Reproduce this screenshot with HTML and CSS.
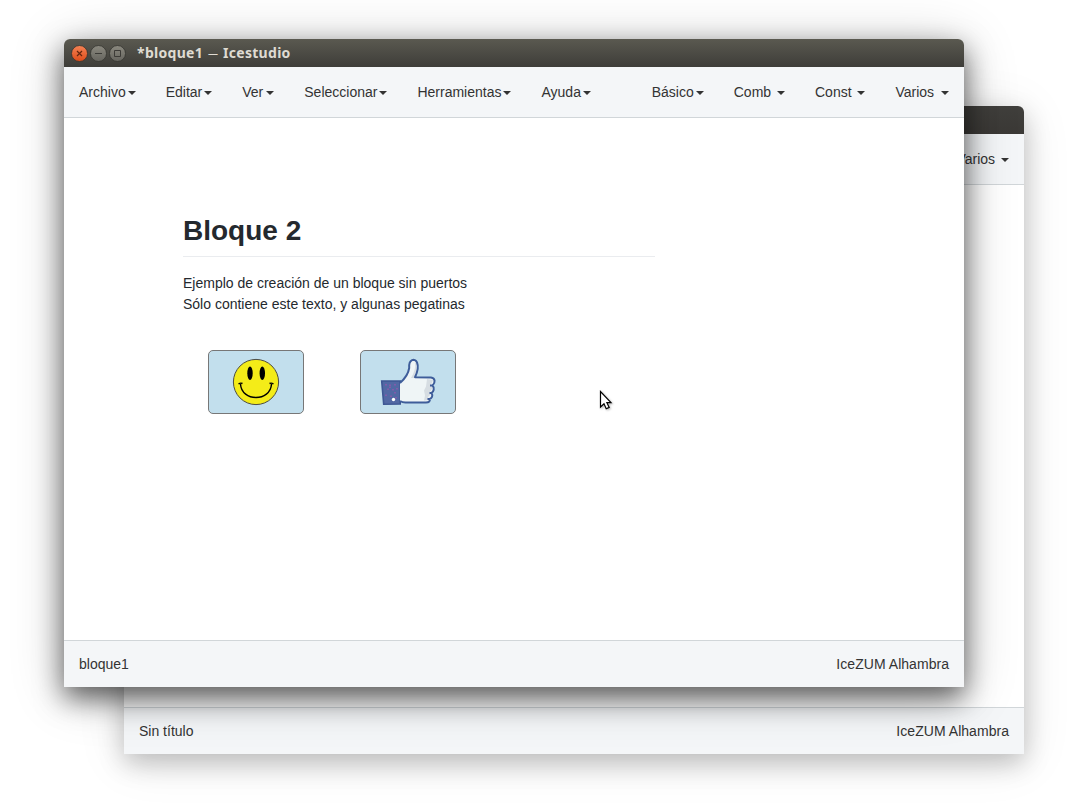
FILE: index.html
```html
<!DOCTYPE html>
<html lang="es">
<head>
<meta charset="utf-8">
<title>Icestudio</title>
<link rel="stylesheet" href="styles.css">
</head>
<body>
<main class="desktop">
  <section class="window window-back">
    <header class="titlebar"></header>
    <nav class="menubar"><div class="menu menu-right"><span class="item">Varios <i class="caret"></i></span></div></nav>
    <div class="canvas"></div>
    <footer class="statusbar"><span>Sin título</span><span class="board">IceZUM Alhambra</span></footer>
  </section>
  <section class="window window-front">
    <header class="titlebar">
      <svg class="controls" width="56" height="18" viewBox="0 0 56 18">
        <defs>
          <linearGradient id="close" x2="0" y2="1"><stop stop-color="#f58355"/><stop offset="1" stop-color="#dd4b19"/></linearGradient>
          <linearGradient id="plain" x2="0" y2="1"><stop stop-color="#8b897f"/><stop offset="1" stop-color="#65645e"/></linearGradient>
        </defs>
        <g stroke="#34332e" stroke-width=".8">
          <circle cx="8.500" cy="8.500" r="8" fill="url(#close)"/>
          <circle cx="27.500" cy="8.500" r="8" fill="url(#plain)"/>
          <circle cx="46.500" cy="8.500" r="8" fill="url(#plain)"/>
        </g>
        <path d="M6 6l5 5m0-5l-5 5" stroke="#64260f" stroke-width="1.200"/>
        <path d="M24 8.500h7M43.500 5.500h6v6h-6z" stroke="#3c3b37" fill="none"/>
      </svg>
      <span class="title">*bloque1 <span class="dash">—</span> Icestudio</span>
    </header>
    <nav class="menubar">
      <div class="menu">
        <span class="item">Archivo<i class="caret"></i></span>
        <span class="item">Editar<i class="caret"></i></span>
        <span class="item item-wide">Ver<i class="caret"></i></span>
        <span class="item">Seleccionar<i class="caret"></i></span>
        <span class="item">Herramientas<i class="caret"></i></span>
        <span class="item">Ayuda<i class="caret"></i></span>
      </div>
      <div class="menu menu-right">
        <span class="item">Básico<i class="caret"></i></span>
        <span class="item">Comb <i class="caret"></i></span>
        <span class="item">Const <i class="caret"></i></span>
        <span class="item item-wide">Varios <i class="caret"></i></span>
      </div>
    </nav>
    <div class="canvas">
      <article class="note">
        <h1>Bloque 2</h1>
        <p>Ejemplo de creación de un bloque sin puertos<br>Sólo contiene este texto, y algunas pegatinas</p>
        <div class="stickers">
          <div class="sticker">
            <svg width="94" height="62" viewBox="0 0 94 62">
              <circle cx="47" cy="31" r="22.600" fill="#f4ec18" stroke="#4b4b45"/>
              <ellipse cx="41" cy="22.300" rx="2.700" ry="6.700"/><ellipse cx="53.300" cy="22.300" rx="2.700" ry="6.700"/>
              <path d="M31.500 33C32.500 51 61.500 51 62.500 33M29.500 33q2-1.500 4-.5M60.500 32.500q2-1 4 .5" fill="none" stroke="#000" stroke-width="1.400"/>
            </svg>
          </div>
          <div class="sticker">
            <svg width="94" height="62" viewBox="0 0 94 62">
              <path d="M20.700 30h18.500v23l-16.500.3z" fill="#5268a4" stroke="#3e5794" stroke-width="1.600"/>
              <path d="M25 33v1.500m4-1V35m5-2v1.500m-7 3V39m5-1v1.500m-7 4V45m9-4v1.500m-5-7V37m7 0v1.500m-6 6V46m5 0v1.500" stroke="#b04fb0"/>
              <circle cx="32.500" cy="48.500" r="1.700" fill="#fff"/>
              <path d="M39 32Q47 25 48.200 17C47.500 8 54 7 56 11.500C57.500 15 56.500 21 54 26.200L70 26.500C74.500 27 74.500 31.500 71.500 34.500C74 37 72.500 41 70.500 42C72.500 45 70.500 47.500 68.500 48C69.500 50 68 51.500 65 51.500H46Q42 52 39 50Z" fill="#eff5f6"/>
              <path d="M54 12q1 7-4 15h3.500q3-9 1.500-15zM66 28l6 1-2 5 2 2-3 5 1 2-3 3 1 3-5 .5 1-5-1-5 2-4z" fill="#d6dde2"/>
              <path d="M39 32Q47 25 48.200 17C47.500 8 54 7 56 11.500C57.500 15 56.500 21 54 26.200L70 26.500C74.500 27 74.500 31.500 71.500 34.500C74 37 72.500 41 70.500 42C72.500 45 70.500 47.500 68.500 48C69.500 50 68 51.500 65 51.500H46Q42 52 39 50M71.500 34.500h-2.500M70.500 42h-2M68.500 48h-2" fill="none" stroke="#3e5d9a" stroke-width="2" stroke-linejoin="round"/>
            </svg>
          </div>
        </div>
      </article>
    </div>
    <footer class="statusbar"><span>bloque1</span><span class="board">IceZUM Alhambra</span></footer>
  </section>
  <svg class="cursor" width="16" height="24" viewBox="0 0 16 24"><path d="M1.500 1.500v15.500l3.500-3.300 2.200 5 3-1.300-2.300-4.700h4.100z" fill="#fff" stroke="#000" stroke-width="1.200"/></svg>
</main>
</body>
</html>
```
FILE: styles.css
```css
* { box-sizing: border-box; }
body { margin: 0; background: #fff; color: #333; font: 14px/20px "Liberation Sans", Arial, sans-serif; }
.desktop { position: relative; width: 1076px; height: 805px; overflow: hidden; }
.window { position: absolute; width: 900px; height: 648px; display: flex; flex-direction: column; border-radius: 6px 6px 0 0; }
.window-back { left: 124px; top: 106px; box-shadow: 0 9px 26px rgba(0,0,0,.22), 0 6px 50px rgba(0,0,0,.1); }
.window-front { left: 64px; top: 39px; box-shadow: 0 11px 28px rgba(0,0,0,.6), 0 6px 56px rgba(0,0,0,.2); }
.titlebar { height: 28px; flex: none; display: flex; align-items: center; padding-left: 7px; border-radius: 6px 6px 0 0; background: linear-gradient(#5a5950, #3e3d39); }
.window-back .titlebar { background: linear-gradient(#403f3c, #3b3936); }
.controls { margin-top: 1px; }
.title { margin-left: 10px; color: #dfdbd2; font: bold 14px/28px "Noto Sans", sans-serif; letter-spacing: .3px; white-space: nowrap; }
.dash { font: 10px "Noto Sans", sans-serif; letter-spacing: 0; margin: 0 1px; vertical-align: 1px; }
.menubar { height: 51px; flex: none; display: flex; padding-top: 15px; background: #f4f6f8; border-bottom: 1px solid #d1d6d9; }
.menu { display: flex; }
.menu-right { margin-left: auto; }
.item { padding: 0 15px; white-space: pre; }
.caret { display: inline-block; margin-left: 2px; vertical-align: middle; border: 4px solid transparent; border-top-color: #333; border-bottom: 0; }
.item-wide .caret { margin-left: 3px; }
.canvas { flex: 1; background: #fff; padding: 95px 0 0 119px; }
.note { width: 472px; color: #24292e; }
.note h1 { margin: 0 0 16px; padding-bottom: 7px; font-size: 28px; line-height: 36px; border-bottom: 1px solid #eaecef; }
.note p { margin: 0; line-height: 21px; }
.stickers { display: flex; gap: 56px; margin: 35px 0 0 25px; }
.sticker { width: 96px; height: 64px; border: 1px solid #777; border-radius: 5px; background: #c2dfed; overflow: hidden; }
.sticker svg { display: block; }
.statusbar { height: 47px; flex: none; display: flex; justify-content: space-between; padding: 13px 15px 0; background: #f4f6f8; border-top: 1px solid #d1d6d9; }
.board { letter-spacing: .04px; }
.cursor { position: absolute; left: 599px; top: 390px; filter: drop-shadow(1px 1px 1px rgba(0,0,0,.3)); }
```
